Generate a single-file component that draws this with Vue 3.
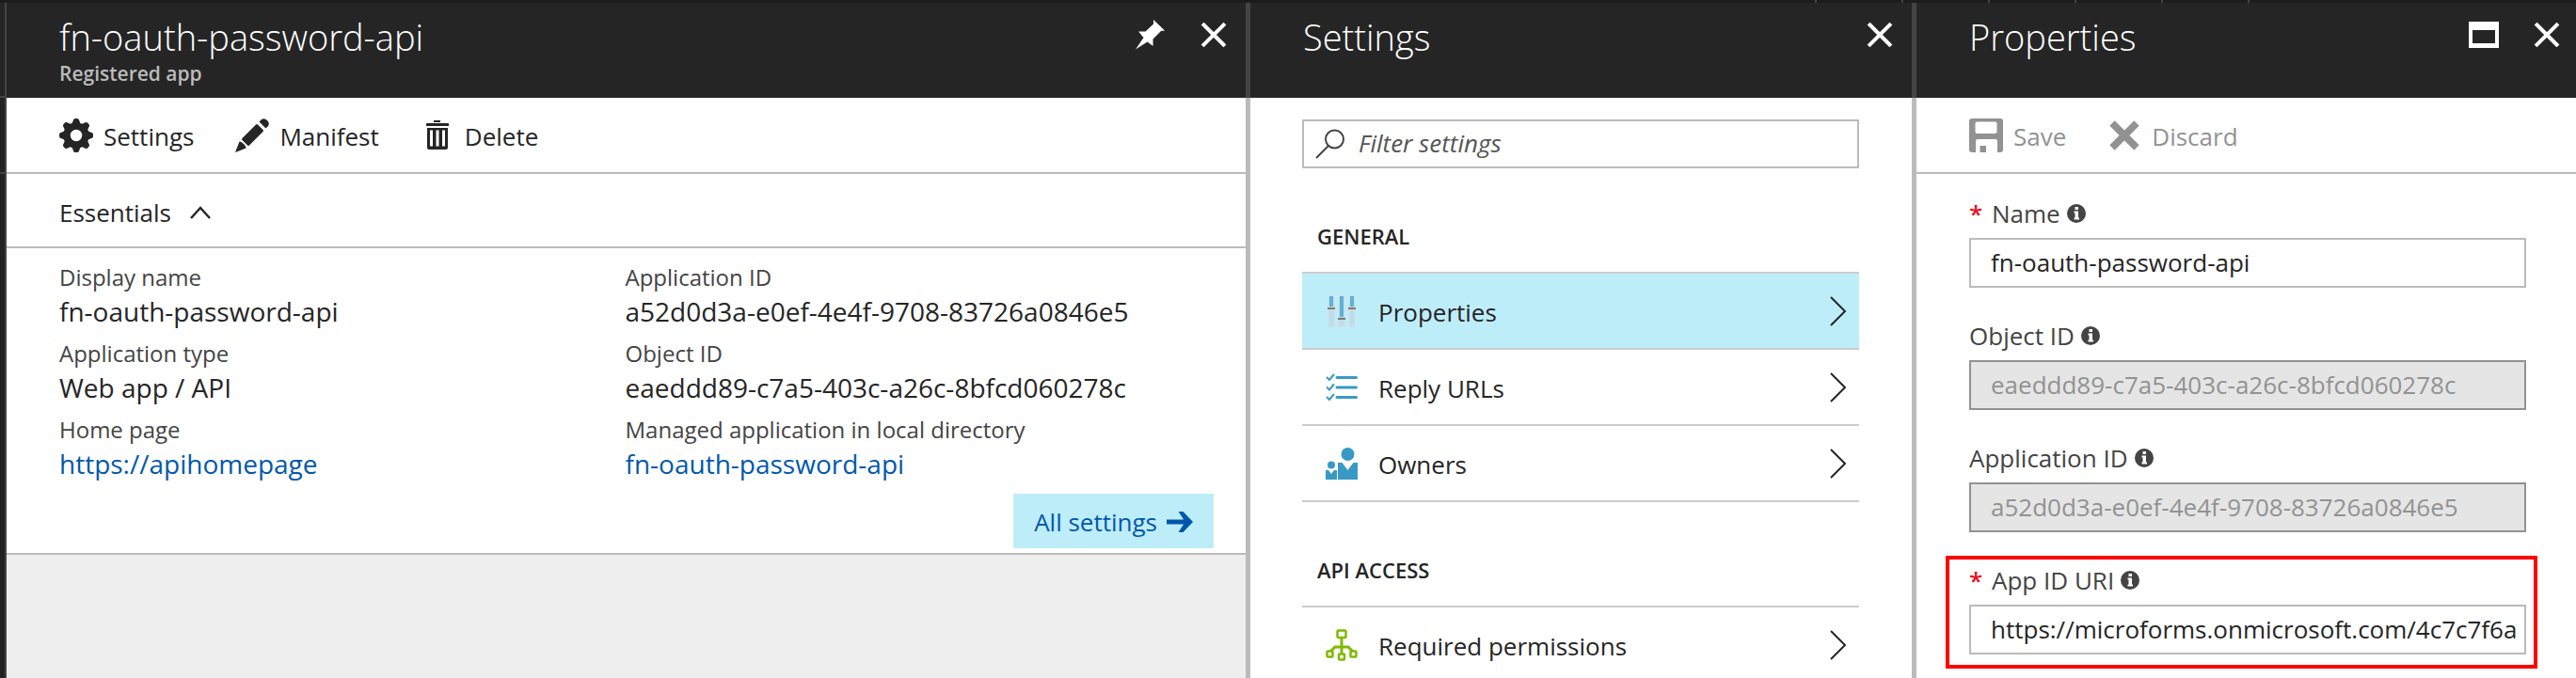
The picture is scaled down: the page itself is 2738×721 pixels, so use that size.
<script setup>
import { ref } from 'vue'

const essentials = [
  { label: 'Display name', value: 'fn-oauth-password-api' },
  { label: 'Application ID', value: 'a52d0d3a-e0ef-4e4f-9708-83726a0846e5' },
  { label: 'Application type', value: 'Web app / API' },
  { label: 'Object ID', value: 'eaeddd89-c7a5-403c-a26c-8bfcd060278c' },
  { label: 'Home page', value: 'https://apihomepage', link: true },
  { label: 'Managed application in local directory', value: 'fn-oauth-password-api', link: true },
]

const sections = [
  {
    title: 'GENERAL',
    items: [
      { icon: 'sliders', label: 'Properties', selected: true },
      { icon: 'checklist', label: 'Reply URLs' },
      { icon: 'people', label: 'Owners' },
    ],
  },
  {
    title: 'API ACCESS',
    items: [{ icon: 'tree', label: 'Required permissions' }],
  },
]

const fields = ref([
  { id: 'name', label: 'Name', value: 'fn-oauth-password-api', required: true },
  { id: 'object-id', label: 'Object ID', value: 'eaeddd89-c7a5-403c-a26c-8bfcd060278c', disabled: true },
  { id: 'application-id', label: 'Application ID', value: 'a52d0d3a-e0ef-4e4f-9708-83726a0846e5', disabled: true },
  { id: 'app-id-uri', label: 'App ID URI', value: 'https://microforms.onmicrosoft.com/4c7c7f6a', required: true, highlighted: true },
])

const filter = ref('')
const teeth = [0, 45, 90, 135, 180, 225, 270, 315]
const sliderBars = [
  { x: 3, level: 12 },
  { x: 14, level: 23 },
  { x: 25, level: 12 },
]
</script>

<template>
  <div class="portal">
    <div class="topbar"><span v-for="n in 6" :key="n" class="tick"></span></div>
    <main class="journey">
      <div class="rail"><div class="rail-head"></div><div class="rail-bar"></div></div>

      <section class="blade">
        <header class="head">
          <div class="titles">
            <h1 class="title">fn-oauth-password-api</h1>
            <p class="subtitle">Registered app</p>
          </div>
          <div class="head-actions">
            <button type="button" aria-label="Pin">
              <svg width="32" height="32" viewBox="0 0 32 32"><path fill="#fff" d="M19 0 31 11.5 27 12 18.500 20.500V28L12.500 23.500 0 31.500 8.500 19 3 12.500H10.500L19 4.500z" /></svg>
            </button>
            <button type="button" aria-label="Close">
              <svg width="28" height="28" viewBox="0 0 28 28"><path stroke="#fff" stroke-width="4" stroke-linecap="square" d="M3.500 3.500 24.500 24.500M24.500 3.500 3.500 24.500" /></svg>
            </button>
          </div>
        </header>
        <div class="body">
          <div class="commands">
            <button type="button" class="command">
              <svg width="36" height="36" viewBox="0 0 36 36" fill="#252525">
                <circle cx="18" cy="18" r="10" fill="none" stroke="#252525" stroke-width="7.500" />
                <path v-for="t in teeth" :key="t" d="M13 7 15 1.500Q15.500 0 17 0H19Q20.500 0 21 1.500L23 7z" :transform="`rotate(${t} 18 18)`" />
              </svg>
              <span>Settings</span>
            </button>
            <button type="button" class="command">
              <svg width="36" height="36" viewBox="0 0 36 36" fill="#252525">
                <path d="M0 36 4.500 24.500Q6 24 9 27T11.500 31.500z" />
                <path d="M22 6.500Q23 5.500 24 6.500L29.500 12Q30.500 13 29.500 14L15 28.500Q14 29.500 13 28.500L7.500 23Q6.500 22 7.500 21z" />
                <path d="M25.500 3.500 28 1Q31-1 34 2T35 8L32.500 10.500z" />
              </svg>
              <span>Manifest</span>
            </button>
            <button type="button" class="command">
              <svg width="36" height="36" viewBox="0 0 36 36" fill="#252525">
                <path d="M14 2H21V4H14zM6 5.500Q6 5 7 5H29Q30 5 30 5.500V8H6z" />
                <path fill-rule="evenodd" d="M7 10H29V31Q29 33 27 33H9Q7 33 7 31zM10 12.500V29.500H13V12.500zM16.500 12.500V29.500H19.500V12.500zM23 12.500V29.500H26V12.500z" />
              </svg>
              <span>Delete</span>
            </button>
          </div>
          <button type="button" class="essentials-toggle" aria-expanded="true">
            <span>Essentials</span>
            <svg width="22" height="14" viewBox="0 0 22 14"><path fill="none" stroke="#252525" stroke-width="2.500" d="M1 13 11 2 21 13" /></svg>
          </button>
          <div class="essentials">
            <dl class="facts">
              <div v-for="f in essentials" :key="f.label">
                <dt>{{ f.label }}</dt>
                <dd><a v-if="f.link" href="#">{{ f.value }}</a><template v-else>{{ f.value }}</template></dd>
              </div>
            </dl>
            <a href="#" class="all-settings">
              <span>All settings</span>
              <svg width="28" height="22" viewBox="0 0 28 22"><path fill="#0058ad" d="M0 8.500H18L12.500 0H17.500L28 11 17.500 22H12.500L18 13.500H0z" /></svg>
            </a>
          </div>
        </div>
      </section>

      <section class="blade">
        <header class="head">
          <h2 class="title">Settings</h2>
          <div class="head-actions">
            <button type="button" aria-label="Close">
              <svg width="28" height="28" viewBox="0 0 28 28"><path stroke="#fff" stroke-width="4" stroke-linecap="square" d="M3.500 3.500 24.500 24.500M24.500 3.500 3.500 24.500" /></svg>
            </button>
          </div>
        </header>
        <div class="body settings">
          <div class="search">
            <svg width="32" height="32" viewBox="0 0 32 32" fill="none" stroke="#444" stroke-width="2"><circle cx="20.500" cy="11" r="9.500" /><path d="M14 18 1 31" /></svg>
            <input v-model="filter" type="text" placeholder="Filter settings" aria-label="Filter settings" />
          </div>
          <template v-for="s in sections" :key="s.title">
            <h3 class="section-title">{{ s.title }}</h3>
            <nav class="menu">
              <a v-for="i in s.items" :key="i.label" href="#" class="menu-item" :class="{ selected: i.selected }">
                <svg v-if="i.icon === 'sliders'" width="34" height="34" viewBox="0 0 34 34">
                  <g v-for="b in sliderBars" :key="b.x">
                    <rect :x="b.x" y="0.500" width="6" height="33" fill="#b8dff0" stroke="#dcdcdc" />
                    <rect :x="b.x + 1" y="1" width="4" :height="b.level" fill="#59b4d9" />
                    <rect :x="b.x - 1" :y="b.level" width="8" height="4" fill="#d8d8d8" />
                    <rect :x="b.x - 1" :y="b.level + 1" width="8" height="2" fill="#7a7a7a" />
                  </g>
                </svg>
                <svg v-else-if="i.icon === 'checklist'" width="34" height="34" viewBox="0 0 34 34" fill="none" stroke="#3999c6">
                  <path stroke-width="3" stroke-linecap="round" d="M12 6.500H32.500M12 17H32.500M12 27.500H32.500" />
                  <path stroke-width="2" d="M1 6 4 9 9 3M1 16.500 4 19.500 9 13.500M1 27 4 30 9 24" />
                </svg>
                <svg v-else-if="i.icon === 'people'" width="34" height="34" viewBox="0 0 34 34" fill="#3999c6">
                  <circle cx="23.500" cy="7" r="7" />
                  <path d="M13 16H17.500L23.500 24 29.500 16H34V34H13z" />
                  <circle cx="6" cy="18.500" r="4" />
                  <path d="M0 24H3L6 28 9 24H12V34H0z" />
                </svg>
                <svg v-else width="34" height="34" viewBox="0 0 34 34" fill="none" stroke="#7fba00" stroke-width="2.500">
                  <rect x="12.500" y="1.500" width="9" height="7.500" rx="1" />
                  <path stroke-width="3" d="M17 9V26M5 24 10 19H24L29 24" />
                  <rect x="1.500" y="23.500" width="6" height="6" rx="1" fill="#fff" />
                  <rect x="26.500" y="23.500" width="6" height="6" rx="1" fill="#fff" />
                  <rect x="14" y="26.500" width="6" height="6" rx="1" fill="#fff" />
                </svg>
                <span class="menu-label">{{ i.label }}</span>
                <svg width="18" height="32" viewBox="0 0 18 32"><path fill="none" stroke="#252525" stroke-width="2" d="M1 1 16 16 1 31" /></svg>
              </a>
            </nav>
          </template>
        </div>
      </section>

      <section class="blade last">
        <header class="head">
          <h2 class="title">Properties</h2>
          <div class="head-actions">
            <button type="button" aria-label="Maximize">
              <svg width="32" height="28" viewBox="0 0 32 28"><path fill="#fff" fill-rule="evenodd" d="M0 0H32V28H0zM4 9V23H28V9z" /></svg>
            </button>
            <button type="button" aria-label="Close">
              <svg width="28" height="28" viewBox="0 0 28 28"><path stroke="#fff" stroke-width="4" stroke-linecap="square" d="M3.500 3.500 24.500 24.500M24.500 3.500 3.500 24.500" /></svg>
            </button>
          </div>
        </header>
        <div class="body">
          <div class="commands">
            <button type="button" class="command" disabled>
              <svg width="36" height="36" viewBox="0 0 36 36">
                <rect width="36" height="36" rx="3" fill="#929292" />
                <rect x="6.500" y="3.500" width="23" height="12.500" rx="2" fill="#fff" />
                <path fill="#fff" d="M7 24Q7 22 9 22H28Q30 22 30 24V36H7z" />
                <rect x="11.500" y="29" width="6.500" height="7" fill="#929292" />
              </svg>
              <span>Save</span>
            </button>
            <button type="button" class="command" disabled>
              <svg width="36" height="36" viewBox="0 0 36 36"><path stroke="#929292" stroke-width="7.500" d="M5 5 31 31M31 5 5 31" /></svg>
              <span>Discard</span>
            </button>
          </div>
          <form class="fields" @submit.prevent>
            <div v-for="f in fields" :key="f.id" class="field" :class="{ highlighted: f.highlighted }">
              <label :for="f.id">
                <span v-if="f.required" class="star">*</span>
                <span>{{ f.label }}</span>
                <svg width="20" height="20" viewBox="0 0 20 20"><circle cx="10" cy="10" r="10" fill="#444" /><path fill="#fff" d="M8.500 3H12V6H8.500zM7.500 7.500H12V14.500H13V16.500H7.500V14.500H8.500V9.500H7.500z" /></svg>
              </label>
              <input :id="f.id" v-model="f.value" type="text" :disabled="f.disabled" />
            </div>
          </form>
        </div>
      </section>
    </main>
  </div>
</template>

<style>
body {
  margin: 0;
}
</style>

<style scoped>
.portal,
.portal * {
  box-sizing: border-box;
}
.portal {
  display: flex;
  flex-direction: column;
  height: 100vh;
  overflow: hidden;
  background: #1c1c1c;
  color: #252525;
  font-family: "Open Sans", "Noto Sans", sans-serif;
  font-size: 26px;
  line-height: 36px;
}
button,
input {
  font: inherit;
  color: inherit;
}
button {
  padding: 0;
  border: 0;
  background: none;
}
a {
  color: #0058ad;
  text-decoration: none;
}
svg {
  display: block;
  flex: none;
}
.topbar {
  display: flex;
  justify-content: flex-end;
  gap: 90px;
  flex: none;
  height: 3px;
  padding-right: 347px;
}
.tick {
  width: 2px;
  background: #444;
}
.journey {
  display: grid;
  grid-template-columns: 7px 1322fr 708fr 701fr;
  flex: 1;
  min-height: 0;
}
.rail {
  border-right: 2px solid #444;
  background: #222;
}
.rail-head {
  height: 101px;
  border-bottom: 2px solid #444;
  background: #252525;
}
.rail-bar {
  height: 81px;
  border-bottom: 2px solid #444;
}
.blade {
  display: flex;
  flex-direction: column;
  min-width: 0;
  min-height: 0;
}
.head {
  display: flex;
  justify-content: space-between;
  align-items: flex-start;
  flex: none;
  height: 101px;
  padding: 10px 20px 0 56px;
  border-right: 5px solid #444;
  background: #252525;
  color: #fff;
}
.title,
.subtitle,
.section-title,
.facts,
.facts dd {
  margin: 0;
}
.title {
  font-size: 38px;
  font-weight: 300;
  line-height: 52px;
}
.subtitle {
  color: #bbb;
  font-size: 21px;
  font-weight: 600;
  line-height: 26px;
}
.head-actions {
  display: flex;
  align-items: center;
  gap: 37px;
  height: 48px;
}
.body {
  flex: 1;
  min-height: 0;
  border-right: 5px solid #bbb;
  background: #fff;
}
.blade:first-of-type .body {
  background: #eee;
}
.last .head,
.last .body {
  border-right: 0;
}
.last .head {
  padding-right: 17px;
}
.commands {
  display: flex;
  gap: 44px;
  height: 81px;
  padding: 1px 0 0 56px;
  border-bottom: 2px solid #bbb;
  background: #fff;
}
.command {
  display: flex;
  align-items: center;
  gap: 11px;
}
.command span {
  padding-top: 2px;
}
.command:disabled {
  color: #929292;
}
.essentials-toggle {
  display: flex;
  align-items: center;
  gap: 20px;
  width: 100%;
  height: 79px;
  padding: 4px 56px 0;
  border-bottom: 2px solid #bbb;
  background: #fff;
}
.essentials {
  display: flex;
  flex-direction: column;
  padding: 14px 34px 5px 56px;
  border-bottom: 2px solid #bbb;
  background: #fff;
}
.facts {
  display: grid;
  grid-template-columns: 1fr 1fr;
  row-gap: 9px;
  margin-right: 24px;
}
.facts dt {
  color: #444;
  font-size: 24px;
  line-height: 34px;
}
.facts dd {
  font-size: 28px;
  line-height: 38px;
}
.all-settings {
  display: flex;
  align-items: center;
  align-self: flex-end;
  gap: 10px;
  height: 58px;
  margin-top: 13px;
  padding: 2px 22px 0;
  background: #beedfa;
}
.settings {
  padding: 23px 56px 0 55px;
  overflow: hidden;
}
.search {
  display: flex;
  align-items: center;
  gap: 14px;
  height: 52px;
  padding-left: 12px;
  border: 2px solid #bbb;
}
.search input {
  flex: 1;
  min-width: 0;
  padding: 0 0 2px;
  border: 0;
  outline: 0;
  background: none;
}
.search input::placeholder {
  color: #555;
  font-style: italic;
}
.section-title {
  padding: 58px 16px 24px;
  font-size: 22px;
  font-weight: 600;
  line-height: 28px;
}
.menu {
  border-top: 2px solid #ccc;
}
.menu-item {
  display: flex;
  align-items: center;
  gap: 22px;
  height: 81px;
  padding: 0 13px 0 25px;
  border-bottom: 2px solid #ccc;
  color: #252525;
}
.menu-item.selected {
  background: #beedfa;
}
.menu-label {
  flex: 1;
  padding-top: 2px;
}
.fields {
  display: flex;
  flex-direction: column;
  gap: 33px;
  padding: 24px 53px 0 56px;
}
.field label {
  display: flex;
  align-items: center;
  gap: 7px;
  margin-bottom: 8px;
  color: #444;
}
.star {
  width: 17px;
  color: #e81123;
  font-weight: 600;
}
.field input {
  display: block;
  width: 100%;
  height: 53px;
  padding: 0 4px 2px 21px;
  border: 2px solid #bbb;
  border-radius: 0;
  outline: 0;
  background: #fff;
}
.field input:disabled {
  border-color: #929292;
  background: #e5e5e5;
  color: #929292;
}
.field.highlighted {
  margin: -8px -12px 0 -25px;
  padding: 4px 8px 11px 21px;
  border: 4px solid #f00;
}
</style>
